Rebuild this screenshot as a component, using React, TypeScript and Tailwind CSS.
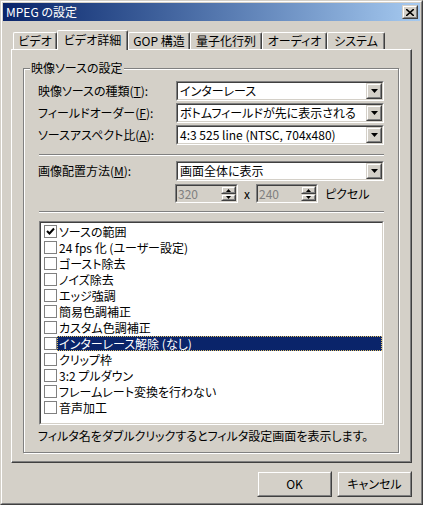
import React from 'react';

const raisedOuter = 'border border-t-[#D4D0C8] border-l-[#D4D0C8] border-r-[#404040] border-b-[#404040] bg-[#D4D0C8]';
const raisedInner = 'h-full w-full border border-t-white border-l-white border-r-[#808080] border-b-[#808080] flex items-center justify-center';

const Raised: React.FC<{ className?: string; children?: React.ReactNode }> = ({ className = '', children }) => (
  <div className={`${raisedOuter} ${className}`}>
    <div className={raisedInner}>{children}</div>
  </div>
);

const Sunken: React.FC<{ className?: string; inner?: string; children?: React.ReactNode }> = ({ className = '', inner = 'bg-white', children }) => (
  <div className={`border border-t-[#808080] border-l-[#808080] border-r-white border-b-white ${className}`}>
    <div className={`h-full w-full border border-t-[#404040] border-l-[#404040] border-r-[#D4D0C8] border-b-[#D4D0C8] flex ${inner}`}>
      {children}
    </div>
  </div>
);

const DownArrow = () => (
  <svg width="7" height="4" viewBox="0 0 7 4" className="block">
    <polygon points="0,0 7,0 3.5,4" fill="#000" />
  </svg>
);

const Combo: React.FC<{ value: string }> = ({ value }) => (
  <Sunken className="w-[208px] h-[20px]">
    <div className="flex-1 pl-[2px] text-[12px] leading-[16px] text-black whitespace-nowrap overflow-hidden">{value}</div>
    <Raised className="w-[16px] h-[16px]">
      <DownArrow />
    </Raised>
  </Sunken>
);

const Spin: React.FC<{ value: string; w: string }> = ({ value, w }) => (
  <Sunken className={`${w} h-[19px]`} inner="bg-[#D4D0C8]">
    <div className="flex-1 pl-[1px] text-[12px] leading-[15px] text-[#808080]">{value}</div>
    <div className="flex flex-col w-[15px]">
      <Raised className="h-[8px] w-full">
        <svg width="5" height="3" viewBox="0 0 5 3" className="block">
          <polygon points="2.5,0 5,3 0,3" fill="#000" />
        </svg>
      </Raised>
      <Raised className="h-[7px] w-full">
        <svg width="5" height="3" viewBox="0 0 5 3" className="block">
          <polygon points="0,0 5,0 2.5,3" fill="#000" />
        </svg>
      </Raised>
    </div>
  </Sunken>
);

const tabs = ['ビデオ', 'ビデオ詳細', 'GOP 構造', '量子化行列', 'オーディオ', 'システム'];
const tabWidths = ['w-[44px]', 'w-[71px]', 'w-[62px]', 'w-[72px]', 'w-[65px]', 'w-[58px]'];

const filters = [
  { name: 'ソースの範囲', checked: true },
  { name: '24 fps 化 (ユーザー設定)' },
  { name: 'ゴースト除去' },
  { name: 'ノイズ除去' },
  { name: 'エッジ強調' },
  { name: '簡易色調補正' },
  { name: 'カスタム色調補正' },
  { name: 'インターレース解除 (なし)', selected: true },
  { name: 'クリップ枠' },
  { name: '3:2 プルダウン' },
  { name: 'フレームレート変換を行わない' },
  { name: '音声加工' },
];

const CheckBox: React.FC<{ checked?: boolean }> = ({ checked }) => (
  <div className="w-[13px] h-[13px] border border-[#808080] bg-white flex items-center justify-center shrink-0">
    {checked && (
      <svg width="9" height="9" viewBox="0 0 9 9" className="block">
        <polyline points="1,4 3.5,6.5 8,1.5" fill="none" stroke="#000" strokeWidth="2" />
      </svg>
    )}
  </div>
);

export default function App() {
  return (
    <div className="w-[423px] h-[505px] bg-[#D4D0C8] border border-t-[#D4D0C8] border-l-[#D4D0C8] border-r-[#404040] border-b-[#404040] font-['Noto_Sans_CJK_JP',sans-serif] [font-feature-settings:'palt'] text-black select-none">
      <div className="h-full w-full border border-t-white border-l-white border-r-[#808080] border-b-[#808080] p-[1px] flex flex-col">
        {/* title bar */}
        <div className="h-[18px] bg-linear-to-r from-[#0A246A] to-[#A6CAF0] flex items-center justify-between">
          <span className="pl-[3px] text-white text-[12px] leading-[16px]">MPEG の設定</span>
          <Raised className="w-[16px] h-[14px] mr-[2px]">
            <svg width="8" height="7" viewBox="0 0 8 7" className="block">
              <path d="M0,0 L8,7 M8,0 L0,7" stroke="#000" strokeWidth="1.6" />
            </svg>
          </Raised>
        </div>

        {/* tabs */}
        <div className="mt-[9px] ml-[10px] h-[19px] flex items-end">
          {tabs.map((t, i) => {
            const sel = i === 1;
            return (
              <div
                key={t}
                className={`${tabWidths[i]} ${sel ? 'h-[20px] -mb-[1px] relative z-10 bg-[#D4D0C8] pb-[2px]' : 'h-[17px]'} border-t border-l border-r border-t-white border-l-white border-r-[#404040] rounded-t-[2px] shadow-[inset_-1px_0_#808080] flex items-center justify-center text-[12px] leading-[14px] whitespace-nowrap`}
              >
                {t}
              </div>
            );
          })}
        </div>

        {/* panel */}
        <div className="ml-[8px] w-[401px] h-[414px] border border-t-white border-l-white border-r-[#404040] border-b-[#404040] shadow-[inset_-1px_-1px_#808080] pt-[18px] pl-[11px]">
          <div className="relative w-[376px] h-[385px] border border-[#808080] shadow-[inset_1px_1px_#fff,1px_1px_#fff] pt-[12px] pl-[14px]">
            <span className="absolute left-[6px] -top-[9px] px-[1px] bg-[#D4D0C8] text-[12px] leading-[16px]">映像ソースの設定</span>

            <div className="flex flex-col gap-[2px]">
              <div className="flex items-center h-[20px]">
                <span className="w-[138px] text-[12px] leading-[16px]">映像ソースの種類(<u>T</u>):</span>
                <Combo value="インターレース" />
              </div>
              <div className="flex items-center h-[20px]">
                <span className="w-[138px] text-[12px] leading-[16px]">フィールドオーダー(<u>F</u>):</span>
                <Combo value="ボトムフィールドが先に表示される" />
              </div>
              <div className="flex items-center h-[20px]">
                <span className="w-[138px] text-[12px] leading-[16px]">ソースアスペクト比(<u>A</u>):</span>
                <Combo value="4:3 525 line (NTSC, 704x480)" />
              </div>
            </div>

            <div className="mt-[9px] ml-[1px] w-[345px] h-[2px] border-t border-b border-t-[#808080] border-b-white" />

            <div className="mt-[5px] flex items-center h-[20px]">
              <span className="w-[138px] text-[12px] leading-[16px]">画像配置方法(<u>M</u>):</span>
              <Combo value="画面全体に表示" />
            </div>

            <div className="mt-[3px] flex items-center h-[19px] pl-[137px]">
              <Spin value="320" w="w-[63px]" />
              <span className="w-[18px] text-center text-[12px] leading-[16px]">x</span>
              <Spin value="240" w="w-[62px]" />
              <span className="ml-[7px] text-[12px] leading-[16px]">ピクセル</span>
            </div>

            <div className="mt-[8px] ml-[1px] w-[345px] h-[2px] border-t border-b border-t-[#808080] border-b-white" />

            <Sunken className="mt-[8px] ml-[1px] w-[345px] h-[204px]" inner="bg-white flex-col">
              {filters.map((f) => (
                <div key={f.name} className="h-[16px] flex items-center pl-[3px]">
                  <CheckBox checked={f.checked} />
                  <div
                    className={`flex-1 h-[15px] pl-[2px] text-[12px] leading-[15px] whitespace-nowrap ${
                      f.selected ? 'bg-[#0A246A] text-white outline outline-1 outline-dotted outline-[#E0C060] -outline-offset-1' : ''
                    }`}
                  >
                    {f.name}
                  </div>
                </div>
              ))}
            </Sunken>

            <div className="mt-[3px] text-[12px] leading-[16px] whitespace-nowrap">
              フィルタ名をダブルクリックするとフィルタ設定画面を表示します。
            </div>
          </div>
        </div>

        {/* buttons */}
        <div className="mt-[8px] mr-[8px] flex justify-end gap-[5px]">
          <Raised className="w-[75px] h-[26px]">
            <span className="text-[12px] leading-[16px]">OK</span>
          </Raised>
          <Raised className="w-[75px] h-[26px]">
            <span className="text-[12px] leading-[16px]">キャンセル</span>
          </Raised>
        </div>
      </div>
    </div>
  );
}
